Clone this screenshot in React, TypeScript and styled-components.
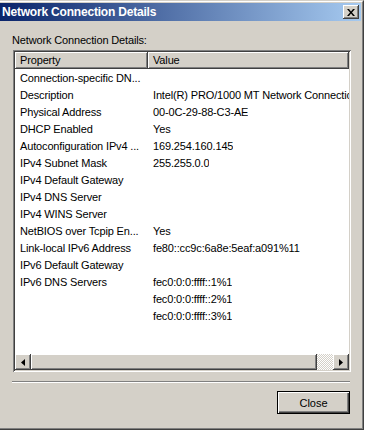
import React from "react";
import styled, { createGlobalStyle } from "styled-components";

const FONT = `"Liberation Sans", Arial, sans-serif`;

const GlobalStyle = createGlobalStyle`
  html, body { margin: 0; padding: 0; background: #ffffff; }
  body {
    width: 366px; height: 433px; overflow: hidden;
    font-family: ${FONT};
    font-size: 11px; color: #000;
    letter-spacing: -0.15px;
  }
  * { box-sizing: border-box; }
`;

const Frame = styled.div`
  width: 364px;
  height: 430px;
  background: #d4d0c8;
  border-top: 1px solid #d4d0c8;
  border-right: 1px solid #404040;
  border-bottom: 1px solid #404040;
`;

const FrameInner = styled.div`
  height: 100%;
  border-top: 1px solid #ffffff;
  border-right: 1px solid #808080;
  border-bottom: 1px solid #808080;
  padding: 1px 1px 1px 0;
  display: flex;
  flex-direction: column;
`;

const TitleBar = styled.div`
  height: 18px;
  flex: none;
  display: flex;
  align-items: center;
  justify-content: space-between;
  padding: 0 2px 0 2px;
  background: linear-gradient(to right, #0a246a 0%, #a6caf0 100%);
`;

const Title = styled.span`
  color: #ffffff;
  font-weight: bold;
  font-size: 12px;
  letter-spacing: -0.2px;
`;

const CloseBox = styled.div`
  width: 16px;
  height: 14px;
  background: #d4d0c8;
  box-shadow: inset -1px -1px #404040, inset 1px 1px #ffffff, inset -2px -2px #808080;
  display: flex;
  align-items: center;
  justify-content: center;
`;

const Client = styled.div`
  flex: 1;
  display: flex;
  flex-direction: column;
  padding: 13px 10px 0 12px;
`;

const Label = styled.div`
  height: 13px;
  line-height: 13px;
`;

const ListView = styled.div`
  margin: 3px 0 0 1px;
  height: 322px;
  padding: 2px;
  background: #d4d0c8;
  box-shadow: inset 1px 1px #808080, inset -1px -1px #ffffff, inset 2px 2px #404040,
    inset -2px -2px #d4d0c8;
  display: flex;
  flex-direction: column;
  overflow: hidden;
`;

const Header = styled.div`
  height: 17px;
  flex: none;
  display: flex;
`;

const HeaderCell = styled.div<{ $w?: number }>`
  ${(p) => (p.$w ? `width: ${p.$w}px; flex: none;` : "flex: 1;")}
  height: 17px;
  line-height: 16px;
  padding-left: 5px;
  background: #d4d0c8;
  box-shadow: inset -1px -1px #404040, inset 1px 1px #ffffff, inset -2px -2px #808080;
  white-space: nowrap;
  overflow: hidden;
`;

const Body = styled.div`
  flex: 1;
  background: #ffffff;
  overflow: hidden;
`;

const Row = styled.div`
  height: 17px;
  display: flex;
  align-items: center;
`;

const Cell = styled.div<{ $w?: number }>`
  ${(p) => (p.$w ? `width: ${p.$w}px;` : "")}
  flex: none;
  padding-left: 5px;
  white-space: nowrap;
  overflow: hidden;
`;

const ScrollBar = styled.div`
  height: 16px;
  flex: none;
  display: flex;
`;

const Raised = styled.div`
  background: #d4d0c8;
  box-shadow: inset -1px -1px #404040, inset 1px 1px #ffffff, inset -2px -2px #808080,
    inset 2px 2px #d4d0c8;
`;

const ArrowButton = styled(Raised)`
  width: 16px;
  height: 16px;
  flex: none;
  display: flex;
  align-items: center;
  justify-content: center;
`;

const Thumb = styled(Raised)<{ $w: number }>`
  width: ${(p) => p.$w}px;
  height: 16px;
  flex: none;
`;

const Track = styled.div`
  flex: 1;
  height: 16px;
  background: repeating-conic-gradient(#ffffff 0 25%, #d4d0c8 0 50%) 0 0 / 2px 2px;
`;

const Separator = styled.div`
  margin-top: 9px;
  height: 2px;
  border-top: 1px solid #808080;
  border-bottom: 1px solid #ffffff;
  margin-right: 1px;
`;

const ButtonRow = styled.div`
  margin-top: 8px;
  display: flex;
  justify-content: flex-end;
  padding-right: 1px;
`;

const PushButton = styled.button`
  width: 73px;
  height: 23px;
  font-family: ${FONT};
  font-size: 11px;
  color: #000;
  background: #d4d0c8;
  border: 1px solid #000000;
  padding: 0;
  box-shadow: inset 1px 1px #ffffff, inset -1px -1px #404040, inset -2px -2px #808080;
`;

const rows: [string, string][] = [
  ["Connection-specific DN...", ""],
  ["Description", "Intel(R) PRO/1000 MT Network Connection"],
  ["Physical Address", "00-0C-29-88-C3-AE"],
  ["DHCP Enabled", "Yes"],
  ["Autoconfiguration IPv4 ...", "169.254.160.145"],
  ["IPv4 Subnet Mask", "255.255.0.0"],
  ["IPv4 Default Gateway", ""],
  ["IPv4 DNS Server", ""],
  ["IPv4 WINS Server", ""],
  ["NetBIOS over Tcpip En...", "Yes"],
  ["Link-local IPv6 Address", "fe80::cc9c:6a8e:5eaf:a091%11"],
  ["IPv6 Default Gateway", ""],
  ["IPv6 DNS Servers", "fec0:0:0:ffff::1%1"],
  ["", "fec0:0:0:ffff::2%1"],
  ["", "fec0:0:0:ffff::3%1"],
];

const PROP_W = 133;

export default function App() {
  return (
    <>
      <GlobalStyle />
      <Frame>
        <FrameInner>
          <TitleBar>
            <Title>Network Connection Details</Title>
            <CloseBox>
              <svg width="8" height="7" viewBox="0 0 8 7">
                <path d="M0 0h2l2 2.5L6 0h2L5 3.5 8 7H6L4 4.5 2 7H0l3-3.5z" fill="#000" />
              </svg>
            </CloseBox>
          </TitleBar>
          <Client>
            <Label>Network Connection Details:</Label>
            <ListView>
              <Header>
                <HeaderCell $w={PROP_W}>Property</HeaderCell>
                <HeaderCell>Value</HeaderCell>
              </Header>
              <Body>
                {rows.map(([k, v], i) => (
                  <Row key={i}>
                    <Cell $w={PROP_W}>{k}</Cell>
                    <Cell>{v}</Cell>
                  </Row>
                ))}
              </Body>
              <ScrollBar>
                <ArrowButton>
                  <svg width="4" height="7" viewBox="0 0 4 7">
                    <path d="M4 0v7L0 3.5z" fill="#000" />
                  </svg>
                </ArrowButton>
                <Thumb $w={286} />
                <Track />
                <ArrowButton>
                  <svg width="4" height="7" viewBox="0 0 4 7">
                    <path d="M0 0v7L4 3.5z" fill="#000" />
                  </svg>
                </ArrowButton>
              </ScrollBar>
            </ListView>
            <Separator />
            <ButtonRow>
              <PushButton>Close</PushButton>
            </ButtonRow>
          </Client>
        </FrameInner>
      </Frame>
    </>
  );
}
